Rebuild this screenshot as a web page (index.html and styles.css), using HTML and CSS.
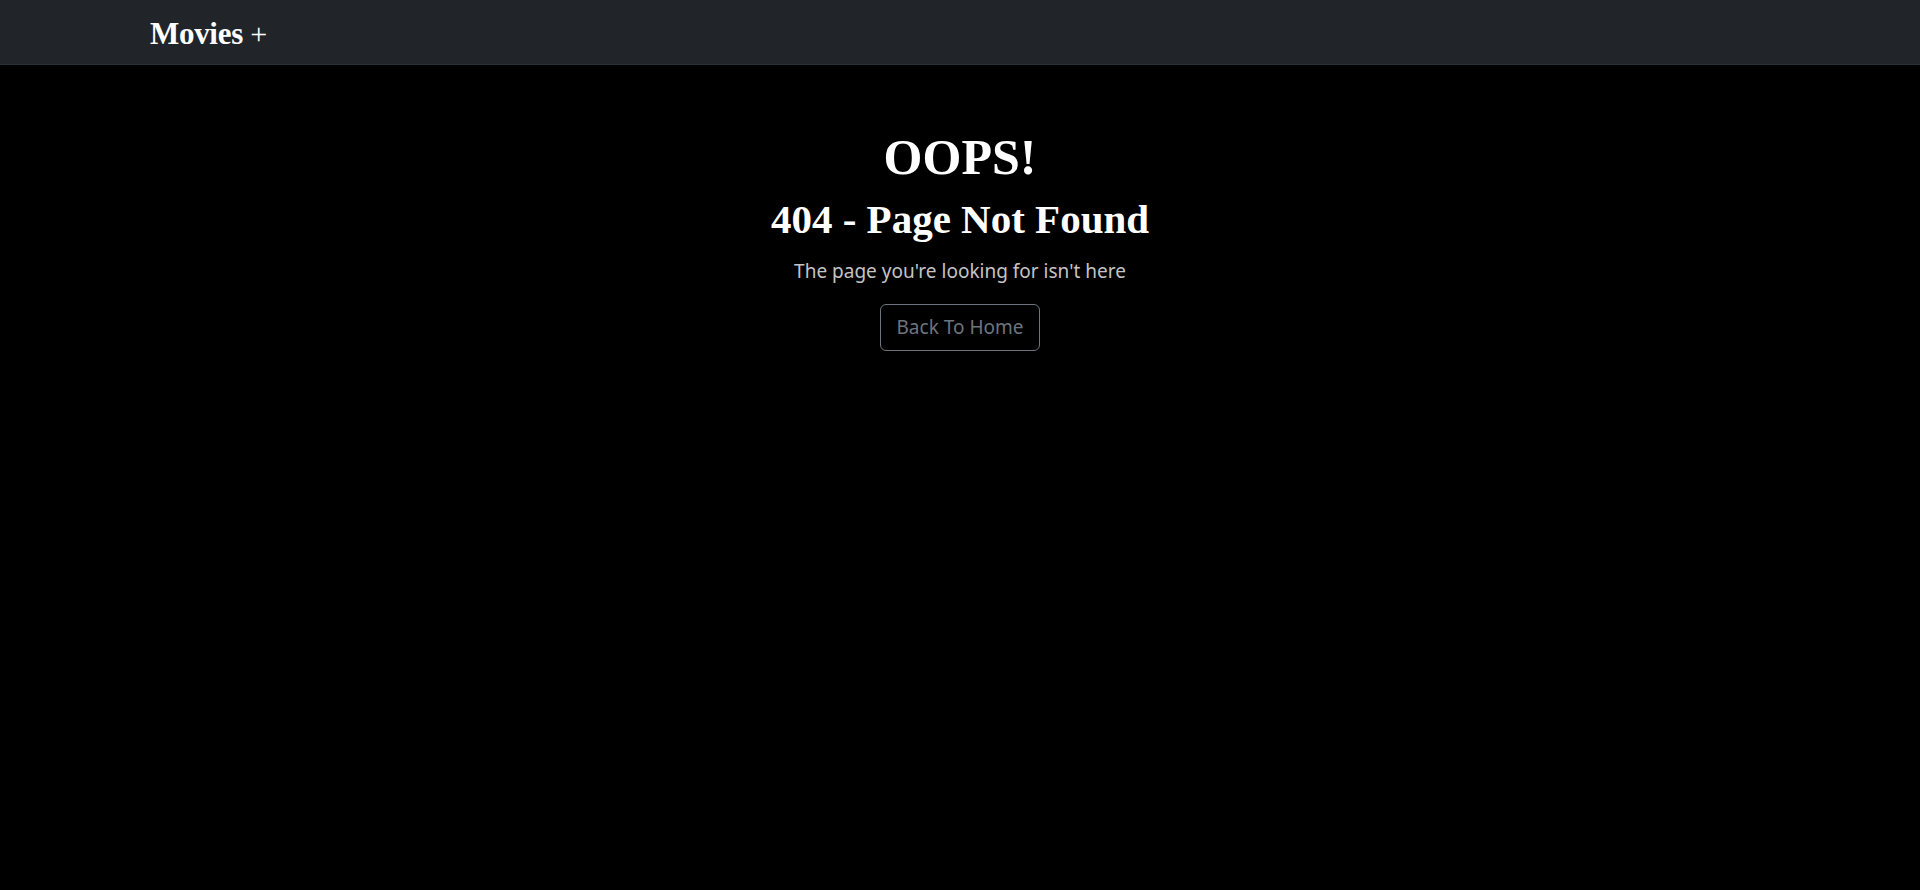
FILE: index.html
```html
<!DOCTYPE html>
<html lang="en">
<head>
<meta charset="utf-8">
<title>Movies + | 404</title>
<link rel="stylesheet" href="styles.css">
</head>
<body>
<nav class="navbar">
  <a class="brand" href="#">Movies <span class="plus">+</span></a>
</nav>
<main class="notfound">
  <h1 class="oops">OOPS!</h1>
  <h2 class="title">404 - Page Not Found</h2>
  <p class="lead">The page you're looking for isn't here</p>
  <a class="btn-home" href="#">Back To Home</a>
</main>
</body>
</html>
```
FILE: styles.css
```css
html, body {
  margin: 0;
  padding: 0;
  background: #000;
  min-height: 100%;
}
body {
  font-family: "Noto Sans", "Open Sans", sans-serif;
  color: #fff;
}
.navbar {
  height: 64px;
  background: #212529;
  border-bottom: 1px solid #2b3035;
  display: flex;
  align-items: center;
  padding-left: 150px;
}
.brand {
  font-family: "Liberation Serif", "DejaVu Serif", serif;
  font-weight: 700;
  font-size: 31px;
  color: #fff;
  text-decoration: none;
  letter-spacing: -0.3px;
  margin-top: 4px;
}
.brand .plus {
  font-weight: 400;
  font-size: 30px;
}
.notfound {
  display: flex;
  flex-direction: column;
  align-items: center;
  padding-top: 62px;
}
.oops {
  font-family: "Liberation Serif", "DejaVu Serif", serif;
  font-weight: 700;
  font-size: 50px;
  line-height: 1.2;
  margin: 0;
}
.title {
  font-family: "Liberation Serif", "DejaVu Serif", serif;
  font-weight: 700;
  font-size: 41px;
  line-height: 1.2;
  margin: 8px 0 0;
}
.lead {
  font-size: 19px;
  color: #c4c4c4;
  margin: 14px 0 0;
}
.btn-home {
  margin-top: 20px;
  display: inline-block;
  padding: 8px 16px;
  font-size: 19px;
  line-height: 1.5;
  color: #6c757d;
  border: 1px solid #6c757d;
  border-radius: 6px;
  text-decoration: none;
}
```
